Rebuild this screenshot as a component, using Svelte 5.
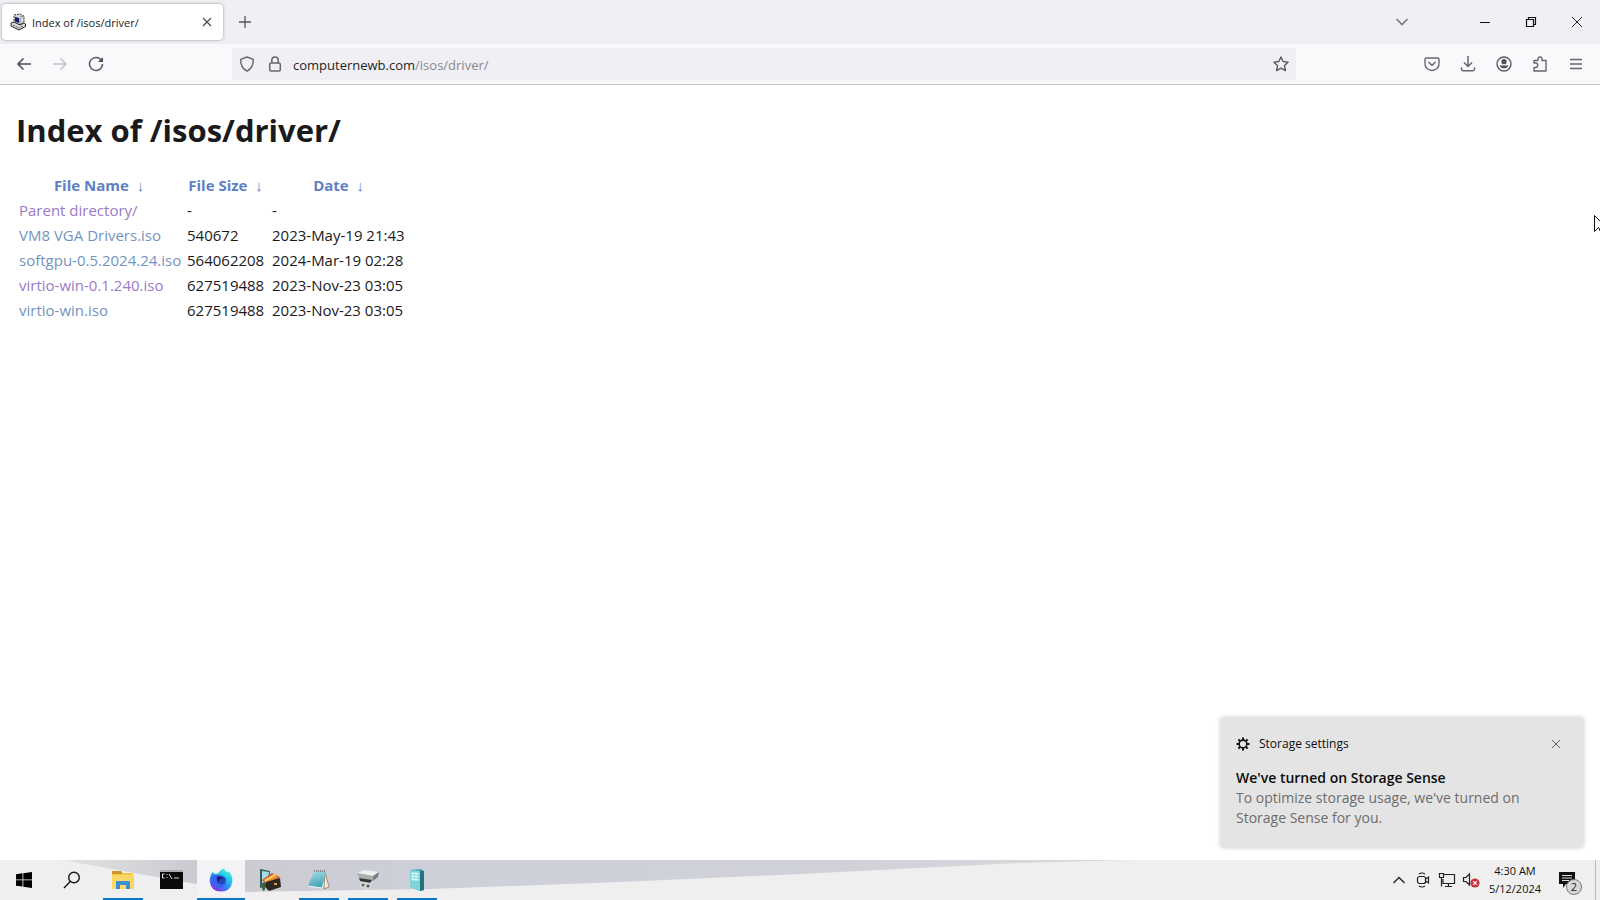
<script>
  const files = [
    { name: 'Parent directory/', size: '-', date: '-', visited: true },
    { name: 'VM8 VGA Drivers.iso', size: '540672', date: '2023-May-19 21:43' },
    { name: 'softgpu-0.5.2024.24.iso', size: '564062208', date: '2024-Mar-19 02:28' },
    { name: 'virtio-win-0.1.240.iso', size: '627519488', date: '2023-Nov-23 03:05', visited: true },
    { name: 'virtio-win.iso', size: '627519488', date: '2023-Nov-23 03:05' }
  ];
  const columns = [
    { label: 'File Name', kind: 'name' },
    { label: 'File Size', kind: 'size' },
    { label: 'Date', kind: 'date' }
  ];
</script>

<div class="desktop">
  <header class="tabs">
    <div class="tab">
      <svg width="16" height="18" viewBox="0 0 16 18" aria-hidden="true">
        <path d="M4 2 10 1l4 2v6l-4 3-6-2z" fill="#d8d8e0" stroke="#333" stroke-dasharray="2 1" />
        <path d="M5 4l4 1v5L5 8.500z" fill="#17176b" />
        <path d="M10 4l4-1M10 5v6" stroke="#888" />
        <path d="M1 10l3-1 6 3 4-2 1.500 1v2.500L9 17l-8-4z" fill="#dcdce2" stroke="#222" />
        <path d="M3 12l6 3 4-2" fill="none" stroke="#555" stroke-dasharray="2 1" />
      </svg>
      <span class="tab-title">Index of /isos/driver/</span>
      <button class="tab-close" aria-label="Close tab">
        <svg width="10" height="10" viewBox="0 0 10 10"><path d="M1 1l8 8M9 1 1 9" stroke="#4b4b54" stroke-width="1.200" /></svg>
      </button>
    </div>
    <button class="new-tab" aria-label="New tab">
      <svg width="14" height="14" viewBox="0 0 14 14"><path d="M7 1v12M1 7h12" stroke="#55555c" stroke-width="1.300" /></svg>
    </button>
    <span class="grow"></span>
    <button class="list-tabs" aria-label="List all tabs">
      <svg width="14" height="10" viewBox="0 0 14 10"><path d="M1.500 2 7 7.500 12.500 2" fill="none" stroke="#77777d" stroke-width="1.600" /></svg>
    </button>
    <button class="window-btn" aria-label="Minimize">
      <svg width="12" height="12" viewBox="0 0 12 12"><path d="M1 6.500h10" stroke="#111" /></svg>
    </button>
    <button class="window-btn" aria-label="Restore">
      <svg width="12" height="12" viewBox="0 0 12 12" fill="none" stroke="#111" stroke-width="1.200"><path d="M1.500 3.500h7v7h-7zM3.500 3.500v-2h7v7h-2" /></svg>
    </button>
    <button class="window-btn" aria-label="Close">
      <svg width="12" height="12" viewBox="0 0 12 12"><path d="M1 1l10 10M11 1 1 11" stroke="#222" /></svg>
    </button>
  </header>

  <nav class="toolbar" aria-label="Navigation">
    <button class="tool" aria-label="Back">
      <svg width="16" height="16" viewBox="0 0 16 16" fill="none" stroke="#4c4c53" stroke-width="1.600"><path d="M15 8H2M7.500 2.500 2 8l5.500 5.500" /></svg>
    </button>
    <button class="tool" aria-label="Forward" disabled>
      <svg width="16" height="16" viewBox="0 0 16 16" fill="none" stroke="#c2c2c7" stroke-width="1.500"><path d="M1 8h13M8.500 2.500 14 8l-5.500 5.500" /></svg>
    </button>
    <button class="tool" aria-label="Reload">
      <svg width="16" height="16" viewBox="0 0 16 16" fill="none" stroke="#5b5b62" stroke-width="1.500"><path d="M13.500 4.500A6.500 6.500 0 1 0 14.500 8" /><path d="M15 1v5h-5z" fill="#4c4c53" stroke="none" /></svg>
    </button>
    <span class="spring"></span>
    <div class="urlbar">
      <button class="inner" aria-label="Tracking protection">
        <svg width="16" height="16" viewBox="0 0 16 16" fill="none" stroke="#66666d" stroke-width="1.400"><path d="M8 1 14.300 3.300c.3 5-1.300 9.200-6.300 11.900C3 12.500 1.400 8.300 1.700 3.300z" stroke-linejoin="round" /></svg>
      </button>
      <button class="inner" aria-label="Connection secure">
        <svg width="16" height="16" viewBox="0 0 16 16" fill="none" stroke="#66666d" stroke-width="1.500"><rect x="2.700" y="7" width="10.600" height="8" rx="1.500" /><path d="M4.800 7V4.200a3.200 3.200 0 0 1 6.400 0V7" /></svg>
      </button>
      <a class="address" href="#address">computernewb.com<span>/isos/driver/</span></a>
      <button class="inner" aria-label="Bookmark this page">
        <svg width="16" height="16" viewBox="0 0 16 16" fill="none" stroke="#5b5b62" stroke-width="1.400" stroke-linejoin="round"><path d="M8 1l2.100 4.500 5 .7-3.600 3.400.9 5L8 12.200l-4.400 2.400.9-5L.9 6.200l5-.7z" /></svg>
      </button>
    </div>
    <span class="spring"></span>
    <button class="tool" aria-label="Save to Pocket">
      <svg width="16" height="16" viewBox="0 0 16 16" fill="none" stroke="#66666d" stroke-width="1.400"><path d="M2.500 2h11A1.500 1.500 0 0 1 15 3.500V8A7 6.500 0 0 1 1 8V3.500A1.500 1.500 0 0 1 2.500 2z" /><path d="M4.700 6.300 8 9.300l3.300-3" stroke-linecap="round" /></svg>
    </button>
    <button class="tool" aria-label="Downloads">
      <svg width="16" height="16" viewBox="0 0 16 16" fill="none" stroke="#66666d" stroke-width="1.500"><path d="M8 0v10.500M4 6.500l4 4 4-4M1.500 11.500v1.500A1.700 1.700 0 0 0 3.200 14.700h9.600a1.700 1.700 0 0 0 1.700-1.700v-1.500" /></svg>
    </button>
    <button class="tool" aria-label="Account">
      <svg width="16" height="16" viewBox="0 0 16 16"><circle cx="8" cy="8" r="7" fill="none" stroke="#5b5b62" stroke-width="1.400" /><circle cx="8" cy="5.700" r="2.600" fill="#505057" /><path d="M3.500 9.500h9A4.800 4.300 0 0 1 3.500 9.500z" fill="#505057" /></svg>
    </button>
    <button class="tool" aria-label="Extensions">
      <svg width="16" height="16" viewBox="0 0 16 16" fill="none" stroke="#66666d" stroke-width="1.400" stroke-linejoin="round"><path d="M2 7V4.500h4V3a2 2 0 0 1 4 0v1.500h4V15H2v-3.500h1.500a2.200 2.200 0 0 0 0-4.500z" /></svg>
    </button>
    <button class="tool" aria-label="Menu">
      <svg width="14" height="14" viewBox="0 0 14 14" stroke="#66666d" stroke-width="1.300"><path d="M1 2.500h12M1 7h12M1 11.500h12" /></svg>
    </button>
  </nav>

  <main>
    <h1>Index of /isos/driver/</h1>
    <table>
      <thead>
        <tr>
          {#each columns as column}
            <th class={column.kind}><a href="#sort">{column.label}</a>&nbsp;<a class="arrow" href="#reverse">&nbsp;↓&nbsp;</a></th>
          {/each}
        </tr>
      </thead>
      <tbody>
        {#each files as file}
          <tr>
            <td><a href="#file" class:visited={file.visited}>{file.name}</a></td>
            <td>{file.size}</td>
            <td>{file.date}</td>
          </tr>
        {/each}
      </tbody>
    </table>
  </main>

  <footer class="taskbar">
    <svg class="wallpaper" viewBox="0 0 1600 40" preserveAspectRatio="none" aria-hidden="true">
      <defs>
        <linearGradient id="band" x1="0" x2="1">
          <stop offset="0" stop-color="#e2e2e5" />
          <stop offset="0.120" stop-color="#cbcbd1" />
          <stop offset="0.400" stop-color="#ced0da" />
          <stop offset="0.700" stop-color="#d0d1d8" />
          <stop offset="1" stop-color="#d9d9dc" />
        </linearGradient>
      </defs>
      <path d="M62 0 190 23l56 9 184-3 190-7 180-8 220-11 110-3z" fill="url(#band)" />
    </svg>

    <button class="task" aria-label="Start">
      <svg width="16" height="16" viewBox="0 0 16 16"><path d="M0 2.200 6.500 1.300v6.200H0zM7.300 1.200 16 0v7.500H7.300zM0 8.300h6.500v6.200L0 13.700zM7.300 8.300H16V16l-8.700-1.300z" /></svg>
    </button>
    <button class="task" aria-label="Search">
      <svg width="18" height="18" viewBox="0 0 18 18" fill="none" stroke="#161616" stroke-width="1.400"><circle cx="11" cy="6.500" r="5.300" /><path d="M7.200 10.500 1 17" /></svg>
    </button>
    <div class="apps">
      <button class="task open" aria-label="File Explorer">
        <svg width="24" height="22" viewBox="0 0 24 22"><path d="M1 2h9l2 2h10v16H1z" fill="#f6c646" /><path d="M1 2h9l1.500 3H1z" fill="#c9952c" /><path d="M1 6h22v14H1z" fill="#fbd768" /><path d="M5 20v-7q0-1 1-1h12q1 0 1 1v7h-4v-4H9v4z" fill="#3d8fd2" /></svg>
      </button>
      <button class="task" aria-label="Command Prompt">
        <svg width="24" height="20" viewBox="0 0 24 20"><path d="M0 0h23v19H0z" fill="#0a0a0a" /><path d="M0 0h23v2H0z" fill="#a9adb0" /><path d="M4.500 4H2.500v4h2M7 4v1M7 7v1M9 4l3 5M14 8h5" fill="none" stroke="#ddd" /></svg>
      </button>
      <button class="task open active" aria-label="Firefox">
        <svg width="24" height="24" viewBox="0 0 24 24">
          <defs>
            <linearGradient id="fox" x1="0.900" y1="0" x2="0.300" y2="1"><stop offset="0" stop-color="#5dffc0" /><stop offset="0.350" stop-color="#22cbe8" /><stop offset="0.650" stop-color="#2a8bf0" /><stop offset="1" stop-color="#8b2ce0" /></linearGradient>
          </defs>
          <path d="M3.500 4 6 6l3-.5Q12 1 15 0.500q1 3 4 4l.5-1.500Q24 8 23.300 13.500 22 23.500 12 23.500 2 23.500.7 13.500.5 8 3.500 4z" fill="url(#fox)" />
          <path d="M2 9q3-3 7-2l5 2q-3 0-4 2-2 4 1 5 4 1 6-3 0 6-6 7Q3 20 2 9z" fill="#3a62f0" />
          <path d="M8 8q6-2 9 3 0 5-5 5.500-5-1-4-5z" fill="#2546b8" />
          <path d="M8 9q4-1 7 2-5-1-5 3-3-2-2-5z" fill="#191e70" />
        </svg>
      </button>
      <button class="task" aria-label="Archive tools">
        <svg width="24" height="24" viewBox="0 0 24 24"><path d="M2 1l10 2-1 14-9 3z" fill="#3a5a58" /><path d="M4 3l7 1-1 9-6 2z" fill="#a4dde6" /><path d="M4 12 14 5l8 4-12 9z" fill="#d84d34" /><path d="M6 12l10-6 5 2-12 8z" fill="#f5cf59" /><path d="M7 14l12-7 2 1-12 9z" fill="#e88a32" /><path d="M8 14l14-4 1 9-12 4-4-4z" fill="#30261e" /><path d="M2 15l5 1v6l-2 1z" fill="#3a6a45" /><path d="M16 15h3v2h-3z" fill="#d6a44c" /></svg>
      </button>
      <button class="task open" aria-label="Notepad">
        <svg width="24" height="22" viewBox="0 0 24 22"><defs><linearGradient id="note" x1="0" y1="0" x2="0.300" y2="1"><stop offset="0" stop-color="#a9e0e8" /><stop offset="1" stop-color="#48a3b8" /></linearGradient></defs><path d="M18 3l4 15-5 2z" fill="#eee" stroke="#a08a6c" /><path d="M7 2h12l-4 17-14-2z" fill="url(#note)" /><path d="M7 2h12" stroke="#858585" stroke-width="2" stroke-dasharray="1 1" /><path d="M1 17l14 2 2-5" fill="none" stroke="#eefafa" /></svg>
      </button>
      <button class="task open" aria-label="Device installer">
        <svg width="24" height="22" viewBox="0 0 24 22"><path d="M1 4 8 1l15 2-6 4z" fill="#f0f0f0" /><path d="M1 4l16 3v5L3 9z" fill="#aaaeb0" /><path d="M17 7l6-4-1 5-5 4z" fill="#777c80" /><path d="M3 9l13 2-2 3-10-2z" fill="#33373a" /><path d="M4 13l11 1v6l-4 1-7-3z" fill="#d4d7d8" /><circle cx="7" cy="16" r="1.500" fill="#666" /><circle cx="12" cy="17" r="1.500" fill="#555" /></svg>
      </button>
      <button class="task open" aria-label="Server manager">
        <svg width="18" height="24" viewBox="0 0 18 24"><path d="M2 2 13 1l3 2v19l-4 1-10-4z" fill="#3faab7" /><path d="M2 2 12 3v20L2 19z" fill="#80d3d8" /><path d="M12 3l4 0v19l-4 1z" fill="#22737e" /><path d="M3 5l8 1M3 8l8 1M3 11l8 1M5 4v9M8 4v9" stroke="#e2ffff" /></svg>
      </button>
    </div>

    <span class="grow"></span>

    <div class="tray">
      <button aria-label="Show hidden icons">
        <svg width="14" height="10" viewBox="0 0 14 10"><path d="M1.500 8 7 2.500 12.500 8" fill="none" stroke="#222" stroke-width="1.400" /></svg>
      </button>
      <button aria-label="Meet Now">
        <svg width="14" height="16" viewBox="0 0 14 16" fill="none" stroke="#222" stroke-width="1.200"><rect x="1.500" y="4.500" width="8" height="7" rx="2" /><path d="M9.500 7 12.500 5v6l-3-2M3 2q3-2 6 0M3 14q3 2 6 0" /></svg>
      </button>
      <button aria-label="Network">
        <svg width="18" height="16" viewBox="0 0 18 16" fill="none" stroke="#222" stroke-width="1.200"><path d="M6 2.500h10.500v9H5V7M10.500 11.500v3M7 14.500h7M1.500 1.500h4v4h-4zM3.500 5.500v9" /></svg>
      </button>
      <button aria-label="Volume muted">
        <svg width="18" height="16" viewBox="0 0 18 16"><path d="M1.500 5.500h2.500L7.500 2v11L4 9.500H1.500z" fill="none" stroke="#222" stroke-width="1.200" /><circle cx="13" cy="11" r="4.600" fill="#c9303c" /><path d="M11.200 9.200l3.600 3.600M14.800 9.200l-3.600 3.600" stroke="#fff" stroke-width="1.200" /></svg>
      </button>
    </div>
    <time datetime="2024-05-12T04:30"><span>4:30 AM</span><span>5/12/2024</span></time>
    <button class="center" aria-label="Notifications">
      <svg width="18" height="18" viewBox="0 0 18 18"><path d="M1 1h16v12H8l-3 4v-4H1z" fill="#111" /><path d="M4 4.500h10M4 7h10M4 9.500h7" stroke="#ddd" /></svg>
      <span class="badge">2</span>
    </button>
    <button class="show-desktop" aria-label="Show desktop"></button>
  </footer>

  <aside class="toast">
    <div class="toast-head">
      <svg width="14" height="14" viewBox="0 0 14 14" fill="none" stroke="#111"><circle cx="7" cy="7" r="3.900" stroke-width="1.600" /><path d="M11.200 7H13.500M.5 7h2.300M7 .5v2.300M7 11.200v2.300M2.400 2.400 4 4M10 10l1.600 1.600M2.400 11.600 4 10M10 4l1.600-1.600" stroke-width="2" /></svg>
      <span>Storage settings</span>
      <button aria-label="Dismiss">
        <svg width="10" height="10" viewBox="0 0 10 10"><path d="M1 1l8 8M9 1 1 9" stroke="#666" /></svg>
      </button>
    </div>
    <strong>We've turned on Storage Sense</strong>
    <p>To optimize storage usage, we've turned on Storage Sense for you.</p>
  </aside>

  <svg class="pointer" width="12" height="20" viewBox="0 0 12 20" aria-hidden="true"><path d="M.5.500v16l4-4 3 6 2-1-3-6h5z" fill="#fff" stroke="#111" /></svg>
</div>

<style>
  :global(body) {
    margin: 0;
    overflow: hidden;
  }
  .desktop {
    position: relative;
    display: flex;
    flex-direction: column;
    min-height: 100vh;
    overflow: hidden;
    background: #fff;
    color: #1a1a1c;
    font-family: "Open Sans", "Noto Sans", sans-serif;
  }
  button {
    display: flex;
    align-items: center;
    justify-content: center;
    padding: 0;
    border: 0;
    background: none;
    font: inherit;
    color: inherit;
  }
  svg {
    display: block;
    flex: none;
  }
  a {
    color: #7394c0;
    text-decoration: none;
  }
  .grow {
    flex: 1;
  }

  .tabs {
    display: flex;
    align-items: center;
    height: 44px;
    background: #f0f0f4;
  }
  .tab {
    display: flex;
    align-items: center;
    gap: 6px;
    box-sizing: border-box;
    width: 221px;
    height: 36px;
    margin-left: 2px;
    padding: 0 4px 0 8px;
    border-radius: 4px;
    background: #fff;
    box-shadow: 0 0 3px rgba(80, 80, 90, 0.6);
  }
  .tab-title {
    flex: 1;
    font-size: 11px;
  }
  .tab-close {
    width: 24px;
    height: 24px;
  }
  .new-tab {
    width: 44px;
    height: 44px;
  }
  .list-tabs {
    width: 36px;
    height: 44px;
    margin-right: 42px;
  }
  .window-btn {
    width: 46px;
    height: 44px;
  }

  .toolbar {
    display: flex;
    align-items: center;
    height: 40px;
    padding: 0 6px;
    border-bottom: 1px solid #c6c6ca;
    background: #f9f9fb;
  }
  .tool {
    width: 36px;
    height: 36px;
  }
  .spring {
    flex: 1;
  }
  .urlbar {
    display: flex;
    flex: 9;
    align-items: center;
    box-sizing: border-box;
    height: 32px;
    padding: 0 1px;
    border-radius: 4px;
    background: #f0f0f4;
  }
  .inner {
    width: 28px;
    height: 32px;
  }
  .address {
    flex: 1;
    padding: 2px 0 0 4px;
    font-size: 13px;
    line-height: 20px;
    color: #1f1f24;
  }
  .address span {
    color: #8a8a90;
  }

  main {
    flex: 1;
    padding: 23px 16px;
  }
  h1 {
    margin: 0 0 20px;
    font-size: 31px;
    line-height: 44px;
    font-weight: 700;
  }
  table {
    border-spacing: 2px;
    font-size: 15px;
    line-height: 21px;
  }
  th,
  td {
    padding: 1px;
    text-align: left;
    white-space: nowrap;
  }
  th {
    text-align: center;
  }
  th a {
    color: #5f80c4;
  }
  .name {
    min-width: 164px;
  }
  .size {
    min-width: 81px;
  }
  .date {
    min-width: 137px;
  }
  .arrow {
    font-weight: 400;
  }
  .visited {
    color: #9a7cc2;
  }

  .taskbar {
    position: relative;
    display: flex;
    height: 40px;
    background: #efefef;
  }
  .wallpaper {
    position: absolute;
    inset: 0;
    width: 100%;
    height: 40px;
  }
  .taskbar > :not(.wallpaper) {
    position: relative;
  }
  .task {
    width: 48px;
    height: 40px;
  }
  .apps {
    display: flex;
    gap: 1px;
    margin-left: 3px;
  }
  .open {
    background: linear-gradient(#0a78c8, #0a78c8) bottom / 40px 2px no-repeat;
  }
  .active {
    background: linear-gradient(#0a78c8, #0a78c8) bottom / 48px 2px no-repeat, #f3f3f5;
  }
  .tray {
    display: flex;
    margin-right: 3px;
  }
  .tray button {
    width: 24px;
  }
  time {
    display: flex;
    flex-direction: column;
    justify-content: center;
    width: 58px;
    font-size: 11px;
    line-height: 18px;
    text-align: center;
    color: #111;
  }
  .center {
    width: 51px;
    padding-right: 5px;
  }
  .badge {
    position: absolute;
    right: 13px;
    bottom: 5px;
    width: 14px;
    height: 14px;
    border: 1px solid #777;
    border-radius: 50%;
    background: #d8d8d8;
    font-size: 11px;
    line-height: 14px;
    text-align: center;
  }
  .show-desktop {
    width: 5px;
    border-left: 1px solid #bbb;
  }

  .toast {
    position: absolute;
    right: 17px;
    bottom: 53px;
    box-sizing: border-box;
    width: 362px;
    padding: 16px 15px 19px;
    background: #e4e4e4;
    box-shadow: 0 0 5px rgba(0, 0, 0, 0.25);
    color: #0c0c0c;
    font-size: 14px;
    line-height: 20px;
  }
  .toast-head {
    display: flex;
    align-items: center;
    gap: 9px;
    margin-bottom: 14px;
    font-size: 12px;
  }
  .toast-head button {
    width: 24px;
    height: 20px;
    margin-left: auto;
  }
  .toast strong {
    display: block;
    font-weight: 600;
  }
  .toast p {
    margin: 0;
    color: #6c6c6c;
  }
  .pointer {
    position: absolute;
    top: 215px;
    left: calc(100% - 6px);
  }
</style>
